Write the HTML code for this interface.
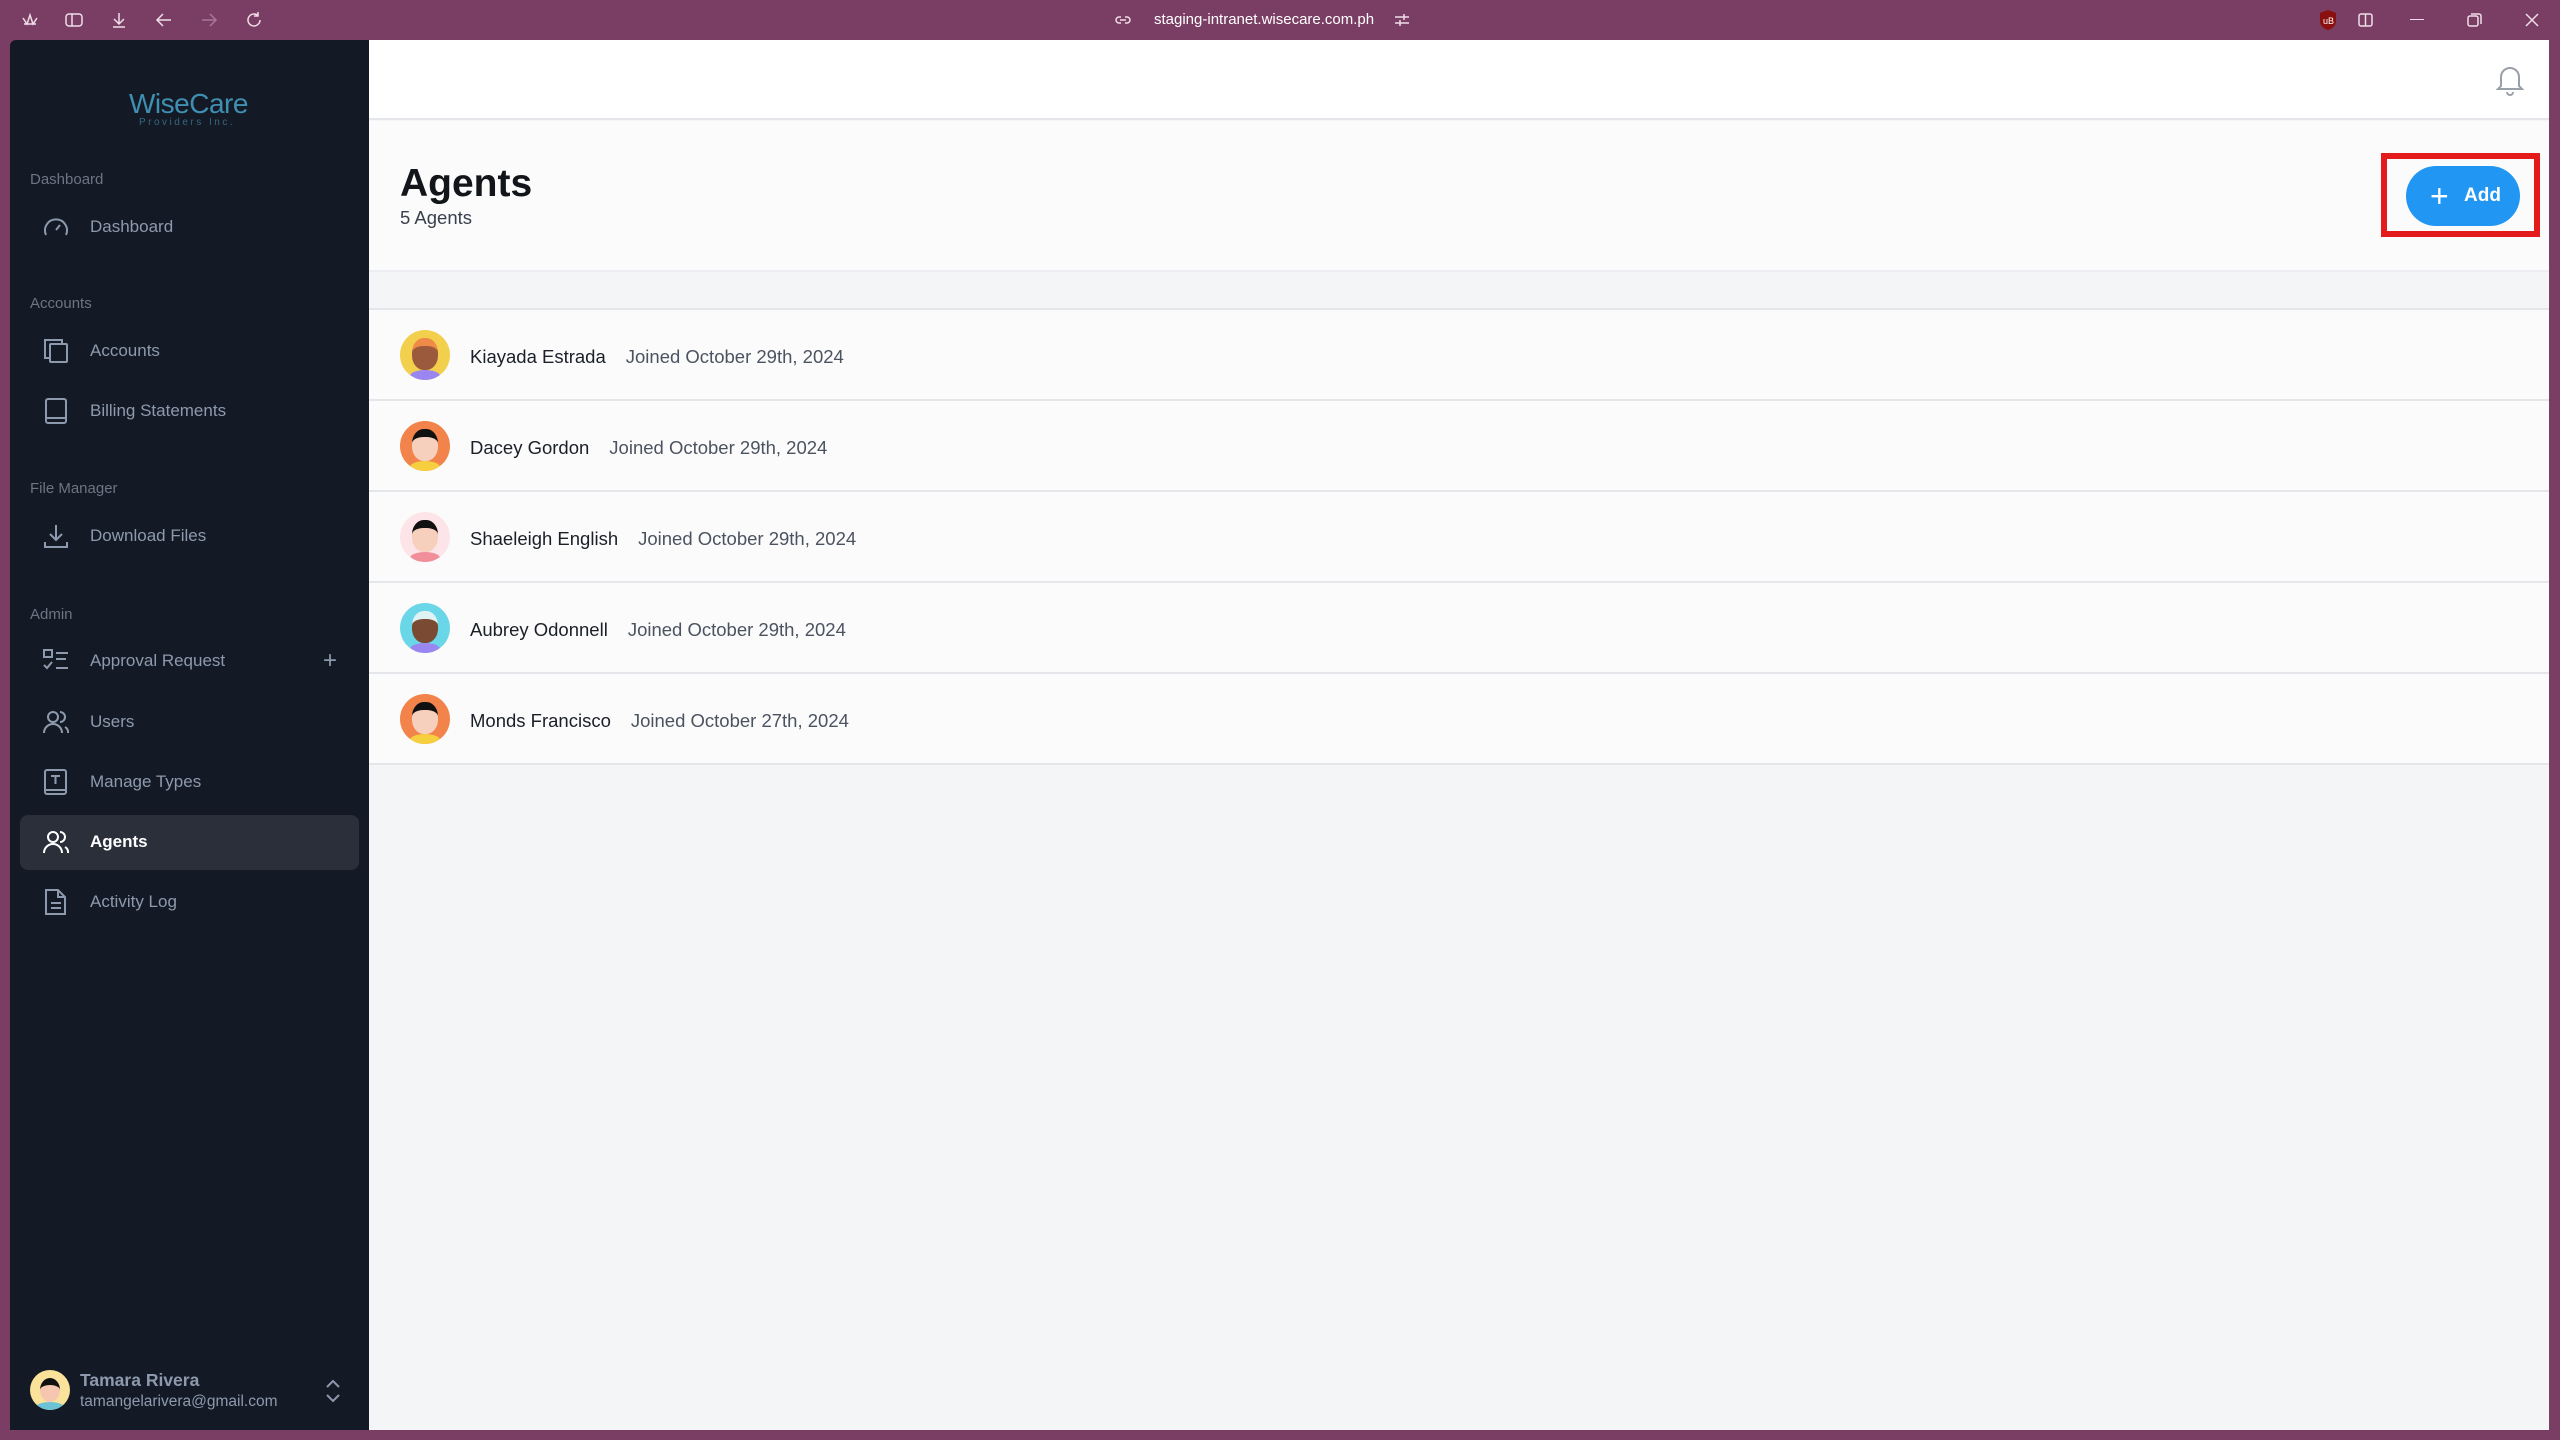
<!DOCTYPE html>
<html><head><meta charset="utf-8"><style>
*{box-sizing:border-box;margin:0;padding:0}
body{width:2560px;height:1440px;background:#7a3d63;font-family:"Liberation Sans",sans-serif;position:relative;overflow:hidden}
.top{position:absolute;left:0;top:0;width:2560px;height:40px;color:#f0dde8;font-size:15px}
.url{position:absolute;left:1154px;top:11px;color:#fff;font-size:15px}
.side{position:absolute;left:10px;top:40px;width:359px;height:1390px;background:#141a25;border-top-left-radius:6px}
.main{position:absolute;left:369px;top:40px;width:2180px;height:1390px;background:#f4f5f7}
.lbl{position:absolute;left:20px;color:#6c7583;font-size:15px}
.it{position:absolute;left:31px;color:#8d9aad;font-size:17px;height:30px;line-height:30px}
.it svg{position:absolute;left:0;top:1px}
.it span{position:absolute;left:49px;white-space:nowrap}
.row{position:absolute;left:0;width:2180px;height:91px;background:#fbfbfc;border-bottom:2px solid #e4e6e9}
.av{position:absolute;left:31px;top:20px;width:50px;height:50px;border-radius:50%;overflow:hidden}
.nm{position:absolute;left:101px;top:36px;font-size:18.5px;color:#1b1f27}
.jn{color:#4c5360;margin-left:20px}
</style></head><body>
<div class="top">
<svg style="position:absolute;left:20px;top:10px" width="20" height="20" fill="none" stroke="#f0dde8" stroke-width="1.5"><path d="M3 8l4 6 3-9 3 9 4-6M4 14h12"/></svg>
<svg style="position:absolute;left:65px;top:12px" width="18" height="16" fill="none" stroke="#f0dde8" stroke-width="1.5"><rect x="1" y="2" width="16" height="12" rx="3"/><path d="M7 2v12"/></svg>
<svg style="position:absolute;left:110px;top:11px" width="18" height="18" fill="none" stroke="#f0dde8" stroke-width="1.5"><path d="M9 2v11M4 8l5 5 5-5M3 16h12"/></svg>
<svg style="position:absolute;left:155px;top:11px" width="18" height="18" fill="none" stroke="#f0dde8" stroke-width="1.5"><path d="M16 9H2M8 3L2 9l6 6"/></svg>
<svg style="position:absolute;left:200px;top:11px" width="18" height="18" fill="none" stroke="#a87896" stroke-width="1.5"><path d="M2 9h14M10 3l6 6-6 6"/></svg>
<svg style="position:absolute;left:245px;top:11px" width="18" height="18" fill="none" stroke="#f0dde8" stroke-width="1.5"><path d="M15 9a6 6 0 1 1-2-4.5M13 1v4h-4"/></svg>
<svg style="position:absolute;left:1114px;top:13px" width="18" height="14" fill="none" stroke="#f0dde8" stroke-width="1.5"><path d="M7 4H5a3 3 0 0 0 0 6h2M11 4h2a3 3 0 0 1 0 6h-2M6 7h6"/></svg>
<div class="url">staging-intranet.wisecare.com.ph</div>
<svg style="position:absolute;left:1394px;top:12px" width="16" height="16" fill="none" stroke="#f0dde8" stroke-width="1.5"><path d="M1 5h14M1 11h14M10 2v6M6 8v6"/></svg>
<svg style="position:absolute;left:2318px;top:9px" width="20" height="22"><path d="M10 1l8 3v8c0 5-4 8-8 9-4-1-8-4-8-9V4z" fill="#8a1010"/><text x="5" y="15" font-size="9" fill="#fff" font-family="Liberation Sans">uB</text></svg>
<svg style="position:absolute;left:2358px;top:12px" width="16" height="16" fill="none" stroke="#f0dde8" stroke-width="1.5"><rect x="1" y="2" width="13" height="12" rx="2"/><path d="M7.5 2v12"/></svg>
<div style="position:absolute;left:2410px;top:19px;width:14px;border-top:1.5px solid #f0dde8"></div>
<svg style="position:absolute;left:2467px;top:12px" width="16" height="16" fill="none" stroke="#f0dde8" stroke-width="1.5"><rect x="1" y="4" width="10" height="10" rx="2"/><path d="M4 2h8a2 2 0 0 1 2 2v8"/></svg>
<svg style="position:absolute;left:2524px;top:12px" width="16" height="16" stroke="#f0dde8" stroke-width="1.5"><path d="M2 2l12 12M14 2L2 14"/></svg>
</div>

<div class="side">
<div style="position:absolute;left:119px;top:48px;color:#3f8fb3;font-size:28px;letter-spacing:-0.5px">WiseCare</div>
<div style="position:absolute;left:129px;top:77px;color:#35677f;font-size:10px;letter-spacing:2.5px">Providers Inc.</div>
<div class="lbl" style="top:131px">Dashboard</div>
<div class="it" style="top:212px"><svg width="30" height="28" fill="none" stroke="#8d9aad" stroke-width="2"><path d="M5 22a11 11 0 1 1 20 0M15 17l4-5"/></svg><span>Dashboard</span></div>
<div class="lbl" style="top:255px">Accounts</div>
<div class="it" style="top:336px"><svg width="30" height="28" fill="none" stroke="#8d9aad" stroke-width="2"><rect x="9" y="7" width="17" height="18" rx="1"/><path d="M9 21H4V3h17v4"/></svg><span>Accounts</span></div>
<div class="it" style="top:396px"><svg width="30" height="28" fill="none" stroke="#8d9aad" stroke-width="2"><rect x="5" y="2" width="20" height="24" rx="2"/><path d="M5 21h20"/></svg><span>Billing Statements</span></div>
<div class="lbl" style="top:440px">File Manager</div>
<div class="it" style="top:521px"><svg width="30" height="28" fill="none" stroke="#8d9aad" stroke-width="2"><path d="M15 3v15M9 12l6 6 6-6M4 20v5h22v-5"/></svg><span>Download Files</span></div>
<div class="lbl" style="top:566px">Admin</div>
<div class="it" style="top:646px"><svg width="30" height="28" fill="none" stroke="#8d9aad" stroke-width="2"><rect x="3" y="3" width="8" height="7"/><path d="M3 18l3 3 5-6M15 6h12M15 12h10M15 21h12"/></svg><span>Approval Request</span><span style="left:282px;font-size:24px">+</span></div>
<div class="it" style="top:707px"><svg width="30" height="28" fill="none" stroke="#8d9aad" stroke-width="2"><circle cx="12" cy="9" r="5"/><path d="M3 25a9 9 0 0 1 18 0M19 4a5 5 0 0 1 0 10M24 19a6 6 0 0 1 3 6"/></svg><span>Users</span></div>
<div class="it" style="top:767px"><svg width="30" height="28" fill="none" stroke="#8d9aad" stroke-width="2"><rect x="4" y="2" width="21" height="24" rx="2"/><path d="M4 22h21M10 8h9M14.5 8v8"/></svg><span>Manage Types</span></div>
<div style="position:absolute;left:10px;top:775px;width:339px;height:55px;background:#2a2f3a;border-radius:8px"></div>
<div class="it" style="top:827px;color:#fff;font-weight:bold"><svg width="30" height="28" fill="none" stroke="#fff" stroke-width="2"><circle cx="12" cy="9" r="5"/><path d="M3 25a9 9 0 0 1 18 0M19 4a5 5 0 0 1 0 10M24 19a6 6 0 0 1 3 6"/></svg><span>Agents</span></div>
<div class="it" style="top:887px"><svg width="30" height="28" fill="none" stroke="#8d9aad" stroke-width="2"><path d="M5 2h12l7 7v17H5zM17 2v7h7M10 15h10M10 20h10"/></svg><span>Activity Log</span></div>
<div style="position:absolute;left:20px;top:1330px;width:40px;height:40px;border-radius:50%;background:#fbe29a;overflow:hidden"><div style="position:absolute;left:10px;top:8px;width:20px;height:24px;border-radius:50%;background:#f6c6b0;border-top:7px solid #111"></div><div style="position:absolute;left:6px;top:32px;width:28px;height:10px;background:#6cc3d6;border-radius:50%"></div></div>
<div style="position:absolute;left:70px;top:1330px;color:#8d9aad;font-weight:bold;font-size:17.5px">Tamara Rivera</div>
<div style="position:absolute;left:70px;top:1353px;color:#8d9aad;font-size:15.5px">tamangelarivera@gmail.com</div>
<svg style="position:absolute;left:313px;top:1338px" width="20" height="26" fill="none" stroke="#8d9aad" stroke-width="2"><path d="M4 9l6-6 6 6M4 17l6 6 6-6"/></svg>
</div>
<style>.side .it{margin-top:-40px}</style>

<div class="main">
<div style="position:absolute;left:0;top:0;width:2180px;height:80px;background:#fff;border-bottom:2px solid #e4e6e9"></div>
<svg style="position:absolute;left:2126px;top:24px" width="30" height="32" fill="none" stroke="#9aa0a8" stroke-width="2"><path d="M6 22V13a9 9 0 0 1 18 0v9l3 3H3zM12 28a3 3 0 0 0 6 0"/></svg>
<div style="position:absolute;left:0;top:81px;width:2180px;height:149px;background:#fbfbfc"></div>
<div style="position:absolute;left:31px;top:122px;font-size:39px;font-weight:bold;color:#121519">Agents</div>
<div style="position:absolute;left:31px;top:167px;font-size:18.5px;color:#3a404b">5 Agents</div>
<div style="position:absolute;left:2012px;top:113px;width:159px;height:84px;border:6px solid #e31b1b"></div>
<div style="position:absolute;left:2037px;top:126px;width:114px;height:60px;background:#2196f3;border-radius:30px;color:#fff;font-weight:bold;font-size:19px;line-height:60px"><span style="position:absolute;left:24px;top:0;font-weight:normal;font-size:32px">+</span><span style="position:absolute;left:58px">Add</span></div>
<div style="position:absolute;left:0;top:230px;width:2180px;height:40px;background:#f4f5f7;border-top:2px solid #eceef1;border-bottom:2px solid #e4e6e9"></div>

<div class="row" style="top:270px"><div class="av" style="background:#f3cf4e"><div style="position:absolute;left:12px;top:8px;width:26px;height:32px;border-radius:45%;background:#9b5a3c;border-top:8px solid #f08a48"></div><div style="position:absolute;left:10px;top:40px;width:30px;height:12px;background:#9a86f0;border-radius:50%"></div></div><div class="nm">Kiayada Estrada<span class="jn">Joined October 29th, 2024</span></div></div>
<div class="row" style="top:361px"><div class="av" style="background:#f2834a"><div style="position:absolute;left:12px;top:8px;width:26px;height:32px;border-radius:45%;background:#f7d0bd;border-top:8px solid #111"></div><div style="position:absolute;left:10px;top:40px;width:30px;height:12px;background:#f5cf3e;border-radius:50%"></div></div><div class="nm">Dacey Gordon<span class="jn">Joined October 29th, 2024</span></div></div>
<div class="row" style="top:452px"><div class="av" style="background:#fde4e8"><div style="position:absolute;left:12px;top:8px;width:26px;height:32px;border-radius:45%;background:#f7d0bd;border-top:8px solid #111"></div><div style="position:absolute;left:10px;top:40px;width:30px;height:12px;background:#f08f9a;border-radius:50%"></div></div><div class="nm">Shaeleigh English<span class="jn">Joined October 29th, 2024</span></div></div>
<div class="row" style="top:543px"><div class="av" style="background:#6ad7e8"><div style="position:absolute;left:12px;top:8px;width:26px;height:32px;border-radius:45%;background:#7a4a32;border-top:8px solid #dff3f5"></div><div style="position:absolute;left:10px;top:40px;width:30px;height:12px;background:#9a86f0;border-radius:50%"></div></div><div class="nm">Aubrey Odonnell<span class="jn">Joined October 29th, 2024</span></div></div>
<div class="row" style="top:634px"><div class="av" style="background:#f2834a"><div style="position:absolute;left:12px;top:8px;width:26px;height:32px;border-radius:45%;background:#f7d0bd;border-top:8px solid #111"></div><div style="position:absolute;left:10px;top:40px;width:30px;height:12px;background:#f5cf3e;border-radius:50%"></div></div><div class="nm">Monds Francisco<span class="jn">Joined October 27th, 2024</span></div></div>
</div>
</body></html>
